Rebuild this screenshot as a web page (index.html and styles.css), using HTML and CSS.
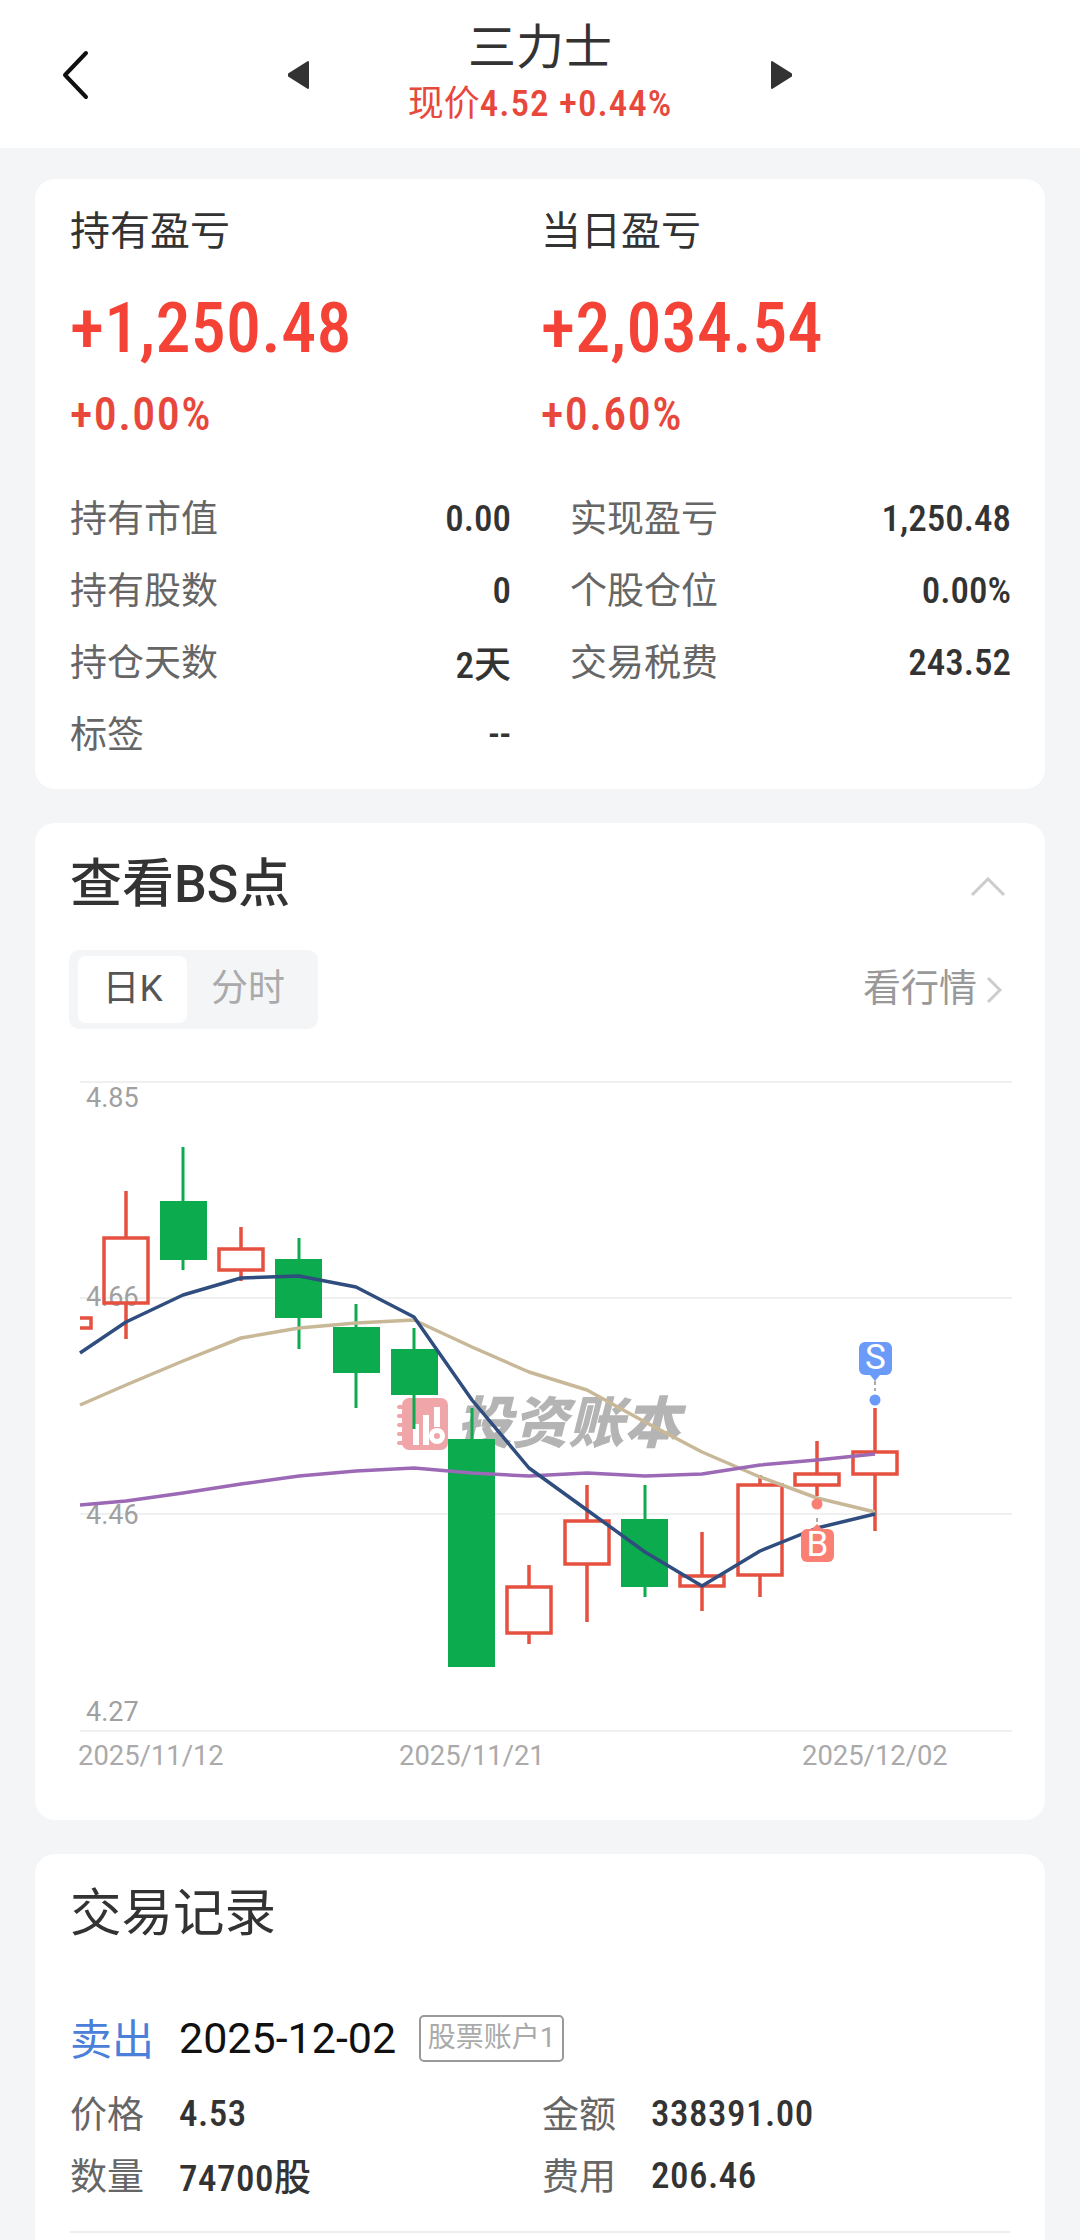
FILE: index.html
```html
<!DOCTYPE html>
<html lang="zh-CN">
<head>
<meta charset="utf-8">
<title>三力士</title>
<link rel="stylesheet" href="styles.css">
</head>
<body>
<header class="topbar">
  <svg class="back" viewBox="0 0 30 50" width="30" height="50"><path d="M26 3 L5 25 L26 47" /></svg>
  <div class="nav">
    <svg class="tri" viewBox="0 0 24 30" width="24" height="30"><path d="M22 2 V28 L3 16 V14 Z"/></svg>
    <div class="titles">
      <div class="title">三力士</div>
      <div class="subtitle">现价<span class="n">4.52 +0.44%</span></div>
    </div>
    <svg class="tri" viewBox="0 0 24 30" width="24" height="30"><path d="M2 2 V28 L21 16 V14 Z"/></svg>
  </div>
</header>

<main class="page">
  <section class="card summary">
    <div class="pl">
      <div class="pl-col">
        <div class="pl-label">持有盈亏</div>
        <div class="pl-big"><span class="n">+1,250.48</span></div>
        <div class="pl-pct"><span class="n">+0.00%</span></div>
      </div>
      <div class="pl-col">
        <div class="pl-label">当日盈亏</div>
        <div class="pl-big"><span class="n">+2,034.54</span></div>
        <div class="pl-pct"><span class="n">+0.60%</span></div>
      </div>
    </div>
    <div class="stats">
      <div class="stat"><span class="k">持有市值</span><span class="v n">0.00</span></div>
      <div class="stat"><span class="k">实现盈亏</span><span class="v n">1,250.48</span></div>
      <div class="stat"><span class="k">持有股数</span><span class="v n">0</span></div>
      <div class="stat"><span class="k">个股仓位</span><span class="v n">0.00%</span></div>
      <div class="stat"><span class="k">持仓天数</span><span class="v n">2天</span></div>
      <div class="stat"><span class="k">交易税费</span><span class="v n">243.52</span></div>
      <div class="stat"><span class="k">标签</span><span class="v n">--</span></div>
    </div>
  </section>

  <section class="card bs">
    <div class="bs-head">
      <h2 class="h">查看BS点</h2>
      <svg class="up" viewBox="0 0 36 20" width="36" height="20"><path d="M2 18 L18 2 L34 18"/></svg>
    </div>
    <div class="bs-tools">
      <div class="seg"><span class="seg-on"><span class="lift">日K</span></span><span class="seg-off lift">分时</span></div>
      <div class="quote"><span class="lift">看行情</span><svg class="more" viewBox="0 0 16 28" width="16" height="28"><path d="M2 2 L14 14 L2 26"/></svg></div>
    </div>
    <svg class="chart" viewBox="35 1029 1010 791" width="1010" height="791">
      <g class="grid">
        <line x1="80" x2="1012" y1="1082" y2="1082"/>
        <line x1="80" x2="1012" y1="1298" y2="1298"/>
        <line x1="80" x2="1012" y1="1514" y2="1514"/>
        <line x1="80" x2="1012" y1="1731" y2="1731"/>
      </g>
      <g class="wm">
        <rect class="wm-bg" x="402" y="1398" width="46" height="52" rx="7"/>
        <g class="wm-ring"><rect x="397" y="1405" width="12" height="4" rx="2"/><rect x="397" y="1414" width="12" height="4" rx="2"/><rect x="397" y="1423" width="12" height="4" rx="2"/><rect x="397" y="1432" width="12" height="4" rx="2"/><rect x="397" y="1441" width="12" height="4" rx="2"/></g>
        <rect class="wm-bar" x="413" y="1424" width="6" height="21"/>
        <rect class="wm-bar" x="423" y="1415" width="6" height="30"/>
        <rect class="wm-bar" x="434" y="1407" width="6" height="20"/>
        <circle class="wm-bar" cx="437" cy="1436" r="8"/>
        <circle class="wm-bg" cx="437" cy="1436" r="3"/>
        <text class="wm-text" x="456" y="1443">投资账本</text>
      </g>
      <g class="labels">
        <text x="86" y="1107">4.85</text>
        <text x="86" y="1306">4.66</text>
        <text x="86" y="1524">4.46</text>
        <text x="86" y="1721">4.27</text>
      </g>
      <g class="dates">
        <text x="78" y="1765">2025/11/12</text>
        <text x="399" y="1765">2025/11/21</text>
        <text x="802" y="1765">2025/12/02</text>
      </g>
      <g class="rise">
        <path d="M80 1318 H91 V1328 H80"/>
        <path d="M126 1191 V1237 M126 1304 V1339"/><rect x="104" y="1238" width="44" height="65"/>
        <path d="M241 1227 V1249 M241 1270 V1281"/><rect x="219" y="1249" width="44" height="21"/>
        <path d="M529 1565 V1587 M529 1633 V1644"/><rect x="507" y="1587" width="44" height="46"/>
        <path d="M587 1485 V1521 M587 1564 V1622"/><rect x="565" y="1521" width="44" height="43"/>
        <path d="M702 1532 V1576 M702 1586 V1611"/><rect x="680" y="1576" width="44" height="10"/>
        <path d="M760 1475 V1485 M760 1575 V1597"/><rect x="738" y="1485" width="44" height="90"/>
        <path d="M817 1441 V1474 M817 1485 V1496"/><rect x="795" y="1474" width="44" height="11"/>
        <path d="M875 1408 V1452 M875 1474 V1531"/><rect x="853" y="1452" width="44" height="22"/>
      </g>
      <g class="fall">
        <path d="M183 1147 V1270"/><rect x="160" y="1201" width="47" height="59"/>
        <path d="M299 1238 V1349"/><rect x="275" y="1259" width="47" height="59"/>
        <path d="M356 1304 V1408"/><rect x="333" y="1327" width="47" height="46"/>
        <path d="M414 1328 V1429"/><rect x="391" y="1349" width="47" height="46"/>
        <path d="M472 1408 V1440"/><rect x="448" y="1439" width="47" height="228"/>
        <path d="M645 1485 V1597"/><rect x="621" y="1519" width="47" height="68"/>
      </g>
      <polyline class="ma10" points="80,1405 126,1385 183,1361 241,1338 299,1328 356,1323 414,1320 472,1347 529,1372 587,1390 645,1422 702,1452 760,1477 817,1498 875,1512"/>
      <polyline class="ma20" points="80,1505 126,1501 183,1493 241,1484 299,1476 356,1471 414,1468 472,1473 529,1476 587,1473 645,1476 702,1474 760,1465 817,1460 875,1454"/>
      <polyline class="ma5" points="80,1353 126,1322 183,1295 241,1278 299,1276 356,1287 414,1317 472,1400 529,1468 587,1510 645,1552 702,1586 760,1551 817,1528 875,1514"/>
      <g class="mark-buy">
        <circle cx="817" cy="1504" r="5.5"/>
        <line class="dash" x1="817" x2="817" y1="1518" y2="1526"/>
        <path d="M812 1529 L817 1524 L822 1529 Z"/>
        <rect x="801" y="1529" width="33" height="33" rx="6"/>
        <text x="817.5" y="1556">B</text>
      </g>
      <g class="mark-sell">
        <circle cx="875" cy="1400" r="5.5"/>
        <line class="dash" x1="875" x2="875" y1="1381" y2="1391"/>
        <path d="M870 1375 L875 1381 L880 1375 Z"/>
        <rect x="859" y="1342" width="33" height="33" rx="6"/>
        <text x="875.5" y="1369">S</text>
      </g>
    </svg>
  </section>

  <section class="card records">
    <h2 class="h rec-title">交易记录</h2>
    <div class="trade-head">
      <span class="sell">卖出</span>
      <span class="date">2025-12-02</span>
      <span class="tag">股票账户1</span>
    </div>
    <div class="trade-grid">
      <div class="cell"><span class="k2">价格</span><span class="v2 n">4.53</span></div>
      <div class="cell"><span class="k2">金额</span><span class="v2 n">338391.00</span></div>
      <div class="cell"><span class="k2">数量</span><span class="v2 n">74700股</span></div>
      <div class="cell"><span class="k2">费用</span><span class="v2 n">206.46</span></div>
    </div>
    <div class="divider"></div>
  </section>
</main>
</body>
</html>
```
FILE: styles.css
```css
* { box-sizing: border-box; }
html, body { margin: 0; padding: 0; }
body {
  width: 1080px;
  height: 2240px;
  overflow: hidden;
  background: #f4f5f7;
  font-family: Roboto, "Noto Sans CJK SC", sans-serif;
  color: #333;
}
.n { font-stretch: 75%; }
.lift { position: relative; top: -5px; }

.topbar {
  position: relative;
  height: 148px;
  background: #fff;
  display: flex;
  justify-content: center;
  align-items: center;
}
.back {
  position: absolute;
  left: 60px;
  top: 50px;
  fill: none;
  stroke: #111;
  stroke-width: 4;
  stroke-linecap: round;
  stroke-linejoin: round;
}
.nav { display: flex; align-items: center; }
.tri { fill: #333; stroke: #333; stroke-width: 2; stroke-linejoin: round; margin-top: 2px; }
.titles { width: 460px; text-align: center; padding-top: 4px; height: 124px; }
.title { font-size: 48px; line-height: 64px; color: #333; }
.subtitle { font-size: 36px; line-height: 44px; color: #e8473c; margin-top: 2px; }
.subtitle .n { font-size: 37px; font-weight: 500; letter-spacing: 1px; }

.page { display: flex; flex-direction: column; gap: 34px; padding: 31px 35px 0; }
.card { background: #fff; border-radius: 20px; padding: 0 35px; }

.summary { height: 610px; padding-top: 27px; }
.pl { display: grid; grid-template-columns: 471px 1fr; }
.pl-label { font-size: 40px; line-height: 52px; color: #333; }
.pl-big { font-size: 70px; line-height: 80px; margin-top: 30px; color: #f44336; font-weight: 500; letter-spacing: 0.3px; }
.pl-pct { font-size: 46px; line-height: 50px; margin-top: 21px; color: #e8473c; font-weight: 500; letter-spacing: 1.4px; }

.stats { display: grid; grid-template-columns: 441px 441px; column-gap: 59px; margin-top: 43px; }
.stat { display: flex; justify-content: space-between; align-items: center; height: 72px; }
.k { font-size: 37px; color: #666; margin-bottom: 5px; }
.v { font-size: 37px; color: #333; font-weight: 500; }

.bs { height: 997px; padding-top: 32px; }
.bs-head { display: flex; justify-content: space-between; align-items: center; height: 60px; padding-right: 4px; }
.h { margin: 0; font-size: 52px; line-height: 60px; font-weight: 500; color: #333; }
.up { fill: none; stroke: #ccc; stroke-width: 3; margin-top: 3px; }
.bs-tools { display: flex; justify-content: space-between; align-items: center; margin-top: 35px; height: 79px; }
.seg {
  display: flex;
  align-items: center;
  height: 79px;
  width: 249px;
  background: #f4f5f7;
  border-radius: 10px;
  padding: 0 9px;
  margin-left: -1px;
  font-size: 37px;
}
.seg-on { width: 109px; height: 67px; background: #fff; border-radius: 8px; display: flex; align-items: center; justify-content: center; color: #555; }
.seg-off { margin-left: 24px; color: #aaa; }
.quote { display: flex; align-items: center; gap: 9px; font-size: 38px; color: #999; padding-right: 8px; }
.more { fill: none; stroke: #ccc; stroke-width: 3; }
.chart { display: block; margin-left: -35px; }
.grid line { stroke: #f0f0f0; stroke-width: 2; }
.labels text { font-size: 27px; fill: #a0a0a0; }
.dates text { font-size: 27.4px; fill: #aaa; }
.rise { stroke: #e5503f; stroke-width: 3.5; fill: none; }
.fall { stroke: #0bab4e; stroke-width: 3; fill: #0bab4e; }
.fall rect { stroke: none; }
.ma5, .ma10, .ma20 { fill: none; stroke-width: 3.5; stroke-linejoin: round; }
.ma5 { stroke: #2f4d7e; }
.ma10 { stroke: #c8b898; }
.ma20 { stroke: #9b69b5; }
.wm-bg { fill: #f0a5a8; }
.wm-ring rect { fill: #f0a5a8; }
.wm-bar { fill: #fff; }
.wm-text { font-size: 56px; font-weight: 900; font-style: italic; fill: #b4b4b4; }
.mark-buy rect, .mark-buy circle, .mark-buy path { fill: #fb7f73; }
.mark-sell rect, .mark-sell circle, .mark-sell path { fill: #6a9bf8; }
.mark-buy text, .mark-sell text { font-size: 35px; fill: #fff; text-anchor: middle; }
.dash { stroke: #aaa; stroke-width: 2; stroke-dasharray: 4 3; }

.records { height: 386px; padding-top: 30px; border-radius: 20px 20px 0 0; }
.rec-title { font-size: 51.5px; font-weight: 400; }
.trade-head { display: flex; align-items: center; height: 60px; margin-top: 62px; }
.sell { font-size: 42px; color: #4a80d8; width: 109px; }
.date { font-size: 43px; color: #111; margin-top: 3px; }
.tag { margin: 5px 0 0 23px; height: 47px; width: 145px; border: 2px solid #999; border-radius: 5px; font-size: 28px; line-height: 42px; color: #aaa; text-align: center; white-space: nowrap; }
.trade-grid { display: grid; grid-template-columns: 472px 1fr; margin-top: 16px; }
.cell { display: flex; align-items: center; height: 62px; }
.k2 { font-size: 37px; color: #666; width: 109px; margin-bottom: 3px; }
.v2 { font-size: 37px; color: #333; font-weight: 500; letter-spacing: 0.5px; }
.divider { height: 2px; background: #eee; margin-top: 25px; }
```
